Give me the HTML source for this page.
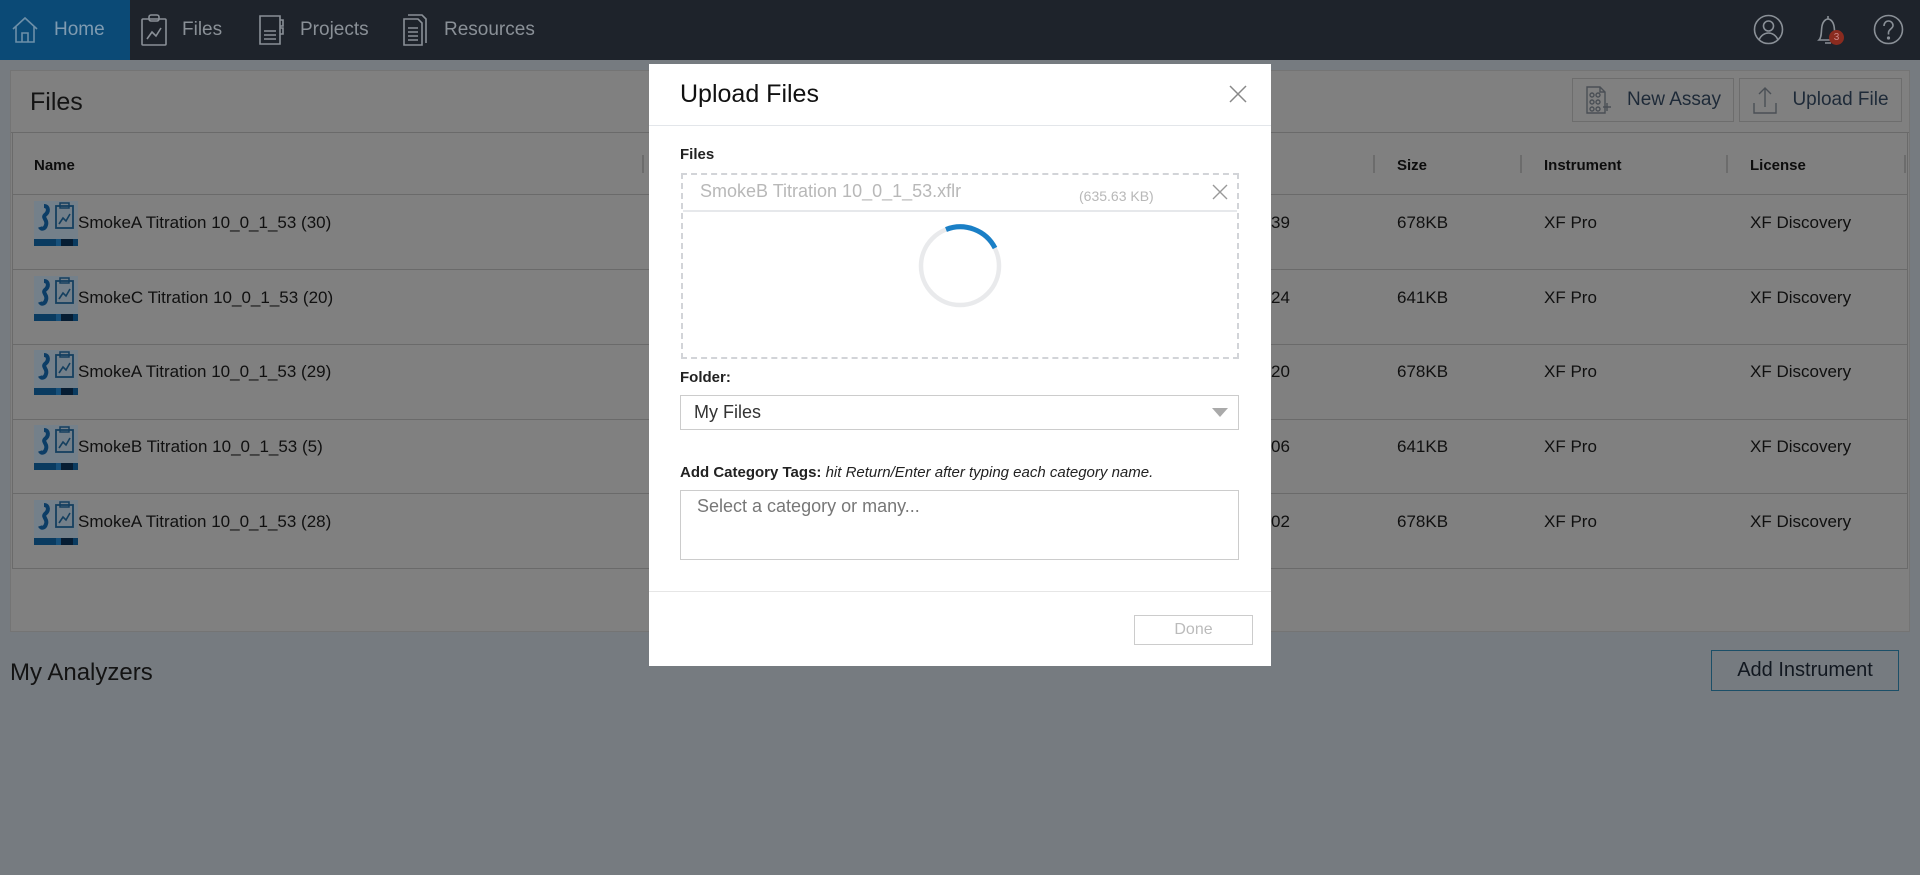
<!DOCTYPE html>
<html><head><meta charset="utf-8"><style>
*{box-sizing:border-box;margin:0;padding:0}
body{width:1920px;height:875px;overflow:hidden;background:#767b80;font-family:"Liberation Sans",sans-serif;position:relative;color:#111}
.nav{position:absolute;left:0;top:0;width:1920px;height:60px;background:#1e232b}
.home{position:absolute;left:0;top:0;width:130px;height:60px;background:#0b4a76}
.ni{position:absolute;top:0;height:60px;display:flex;align-items:center;color:#8a9097;font-size:19px}
.ni svg{margin-right:14px}
.abs{position:absolute}
.panel{position:absolute;left:10px;top:70px;width:1900px;height:562px;background:#808080;border:1px solid #747474}
.btn{position:absolute;border:1px solid #6d6d6d;height:44px;display:flex;align-items:center;justify-content:center;font-size:19px;color:#1e2a38}
.th{position:absolute;top:157px;font-size:15px;font-weight:bold;color:#0d0d0d}
.sep{position:absolute;top:155px;width:2px;height:18px;background:#6c6c6c}
.row{position:absolute;left:12px;width:1896px;height:1px;background:#6a6a6a}
.cell{position:absolute;font-size:17px;color:#101010}
.modal{position:absolute;left:649px;top:64px;width:622px;height:602px;background:#fff}
.lbl{position:absolute;font-size:15px;font-weight:bold;color:#222}
</style></head><body>
<div class="nav">
 <div class="home"></div>
 <div class="ni" style="left:10px"><svg width="30" height="30" viewBox="0 0 30 30" fill="none" stroke="#6d8fa8" stroke-width="1.6"><path d="M3 14L15 3l12 11M6 11v16h18V11M12 27v-9h6v9"/></svg><span style="color:#7f9bb1">Home</span></div>
 <div class="ni" style="left:140px"><svg width="28" height="32" viewBox="0 0 28 32" fill="none" stroke="#8a9097" stroke-width="1.6"><rect x="2" y="5" width="24" height="26" rx="1"/><rect x="9" y="1" width="10" height="6" rx="2"/><path d="M7 25l5-7 4 4 5-8"/></svg>Files</div>
 <div class="ni" style="left:258px"><svg width="28" height="32" viewBox="0 0 28 32" fill="none" stroke="#8a9097" stroke-width="1.6"><path d="M2 2h20v28H2zM22 6h3v6h-3M22 14h3v6h-3M6 17h12M6 21h12M6 25h12"/></svg>Projects</div>
 <div class="ni" style="left:402px"><svg width="28" height="32" viewBox="0 0 28 32" fill="none" stroke="#8a9097" stroke-width="1.6"><path d="M6 1h14l4 4v24M2 5h14l4 4v22H2zM6 14h10M6 18h10M6 22h10M6 26h10"/></svg>Resources</div>
 <svg class="abs" style="left:1753px;top:14px" width="31" height="31" viewBox="0 0 31 31" fill="none" stroke="#8a9097" stroke-width="1.6"><circle cx="15.5" cy="15.5" r="14"/><circle cx="15.5" cy="12" r="5"/><path d="M6 26c2-5 6-7 9.5-7s7.5 2 9.5 7"/></svg>
 <svg class="abs" style="left:1813px;top:14px" width="30" height="32" viewBox="0 0 30 32" fill="none" stroke="#8a9097" stroke-width="1.6"><path d="M15 2v3M6 26c3-3 2-9 3-14s4-7 6-7 5 2 6 7 0 11 3 14zM12 29h6"/></svg>
 <div class="abs" style="left:1829px;top:30px;width:15px;height:15px;border-radius:50%;background:#8a2b1f;color:#c88;font-size:10px;text-align:center;line-height:15px">3</div>
 <svg class="abs" style="left:1873px;top:14px" width="31" height="31" viewBox="0 0 31 31" fill="none" stroke="#8a9097" stroke-width="1.6"><circle cx="15.5" cy="15.5" r="14"/><path d="M11 12c0-3 2-5 4.5-5s4.5 2 4.5 4.5c0 3-4.5 4-4.5 7v2"/><circle cx="15.5" cy="24" r=".8" fill="#8a9097"/></svg>
</div>

<div class="panel"></div>
<div class="abs" style="left:30px;top:88px;font-size:25px;color:#141414">Files</div>
<div class="abs" style="left:11px;top:132px;width:1898px;height:1px;background:#6a6a6a"></div>
<div class="btn" style="left:1572px;top:78px;width:162px"><svg width="28" height="30" viewBox="0 0 28 30" fill="none" stroke="#4a4f55" stroke-width="1.4" style="margin-right:14px"><path d="M2 2h13l5 5v21H2zM15 2v5h5"/><circle cx="7" cy="10" r="2"/><circle cx="13" cy="10" r="2"/><circle cx="7" cy="17" r="2"/><circle cx="13" cy="17" r="2"/><circle cx="7" cy="24" r="2"/><circle cx="13" cy="24" r="2"/><path d="M18 22h8M22 18v8"/></svg>New Assay</div>
<div class="btn" style="left:1739px;top:78px;width:163px"><svg width="26" height="30" viewBox="0 0 26 30" fill="none" stroke="#4a4f55" stroke-width="1.4" style="margin-right:14px"><path d="M2 18v10h22V18M13 22V3M7 9l6-6 6 6"/></svg>Upload File</div>

<div class="abs" style="left:12px;top:133px;width:1896px;height:436px;border-left:1px solid #6a6a6a;border-right:1px solid #6a6a6a;border-bottom:1px solid #6a6a6a"></div>
<div class="th" style="left:34px">Name</div>
<div class="sep" style="left:642px"></div>
<div class="sep" style="left:1373px"></div><div class="th" style="left:1397px">Size</div>
<div class="sep" style="left:1520px"></div><div class="th" style="left:1544px">Instrument</div>
<div class="sep" style="left:1726px"></div><div class="th" style="left:1750px">License</div>
<div class="sep" style="left:1904px"></div>
<div class="row" style="top:194px"></div>
<div class="row" style="top:269px"></div>
<div class="row" style="top:344px"></div>
<div class="row" style="top:419px"></div>
<div class="row" style="top:493px"></div>

<div id="rows"></div>
<script>
var names=["SmokeA Titration 10_0_1_53 (30)","SmokeC Titration 10_0_1_53 (20)","SmokeA Titration 10_0_1_53 (29)","SmokeB Titration 10_0_1_53 (5)","SmokeA Titration 10_0_1_53 (28)"];
var d=["39","24","20","06","02"],sz=["678KB","641KB","678KB","641KB","678KB"];
var h="";
for(var i=0;i<5;i++){var y=201+i*74.7;
h+='<div class="abs" style="left:34px;top:'+y+'px;width:44px;height:45px;background:#74808a"><svg width="44" height="38" viewBox="0 0 44 38" fill="none"><path d="M10 5c5 0 5 6 1 9-3 3 3 5 1 10-1 4-5 5-6 2" stroke="#0c3d66" stroke-width="4"/><rect x="22" y="5" width="17" height="22" stroke="#143f5f" stroke-width="1.8"/><rect x="26" y="2" width="9" height="5" stroke="#143f5f" stroke-width="1.5"/><path d="M25 23l4-6 3 3 4-7" stroke="#143f5f" stroke-width="1.6"/></svg><div style="position:absolute;left:0;top:38px;width:44px;height:7px;background:#0a3b60"><div style="position:absolute;left:22px;width:5px;height:7px;background:#17507a"></div><div style="position:absolute;left:27px;width:12px;height:7px;background:#061d33"></div></div></div>';
h+='<div class="cell" style="left:78px;top:'+(y+12)+'px">'+names[i]+'</div>';
h+='<div class="cell" style="left:1271px;top:'+(y+12)+'px">'+d[i]+'</div>';
h+='<div class="cell" style="left:1397px;top:'+(y+12)+'px">'+sz[i]+'</div>';
h+='<div class="cell" style="left:1544px;top:'+(y+12)+'px">XF Pro</div>';
h+='<div class="cell" style="left:1750px;top:'+(y+12)+'px">XF Discovery</div>';}
document.getElementById("rows").innerHTML=h;
</script>

<div class="abs" style="left:10px;top:659px;font-size:24px;color:#131313">My Analyzers</div>
<div class="btn" style="left:1711px;top:650px;width:188px;height:41px;border:1px solid #1b4f68;font-size:20px;color:#121820">Add Instrument</div>

<div class="modal">
 <div class="abs" style="left:31px;top:16px;font-size:25px;color:#111">Upload Files</div>
 <svg class="abs" style="left:579px;top:20px" width="20" height="20" viewBox="0 0 20 20" stroke="#888" stroke-width="1.5"><path d="M2 2l16 16M18 2L2 18"/></svg>
 <div class="abs" style="left:0;top:61px;width:622px;height:1px;background:#e3e6ea"></div>
 <div class="lbl" style="left:31px;top:82px">Files</div>
 <div class="abs" style="left:32px;top:109px;width:558px;height:186px;border:2px dashed #d2d4d8"></div>
 <div class="abs" style="left:51px;top:117px;font-size:18px;color:#b8b8b8">SmokeB Titration 10_0_1_53.xflr</div>
 <div class="abs" style="left:430px;top:124px;font-size:14px;color:#b8b8b8">(635.63 KB)</div>
 <svg class="abs" style="left:563px;top:120px" width="16" height="16" viewBox="0 0 16 16" stroke="#999" stroke-width="1.4"><path d="M1 1l14 14M15 1L1 15"/></svg>
 <div class="abs" style="left:34px;top:146px;width:554px;height:2px;background:#e6e8eb"></div>
 <svg class="abs" style="left:267px;top:158px" width="88" height="88" viewBox="0 0 88 88" fill="none"><circle cx="44" cy="44" r="39" stroke="#e9eaec" stroke-width="4.5"/><path d="M30 7.5A39 39 0 0 1 79 26" stroke="#1a7fc6" stroke-width="5"/></svg>
 <div class="lbl" style="left:31px;top:305px">Folder:</div>
 <div class="abs" style="left:31px;top:331px;width:559px;height:35px;border:1px solid #ccc;font-size:18px;color:#333;padding:6px 0 0 13px">My Files</div>
 <div class="abs" style="left:563px;top:344px;width:0;height:0;border-left:8px solid transparent;border-right:8px solid transparent;border-top:9px solid #aaa"></div>
 <div class="abs" style="left:31px;top:400px;font-size:15px;color:#222"><b>Add Category Tags:</b> <i>hit Return/Enter after typing each category name.</i></div>
 <div class="abs" style="left:31px;top:426px;width:559px;height:70px;border:1px solid #ccc;font-size:18px;color:#777;padding:5px 0 0 16px">Select a category or many...</div>
 <div class="abs" style="left:0;top:527px;width:622px;height:1px;background:#e6e6e6"></div>
 <div class="abs" style="left:485px;top:551px;width:119px;height:30px;border:1px solid #ccc;font-size:16px;color:#bbb;text-align:center;line-height:28px">Done</div>
</div>
</body></html>
